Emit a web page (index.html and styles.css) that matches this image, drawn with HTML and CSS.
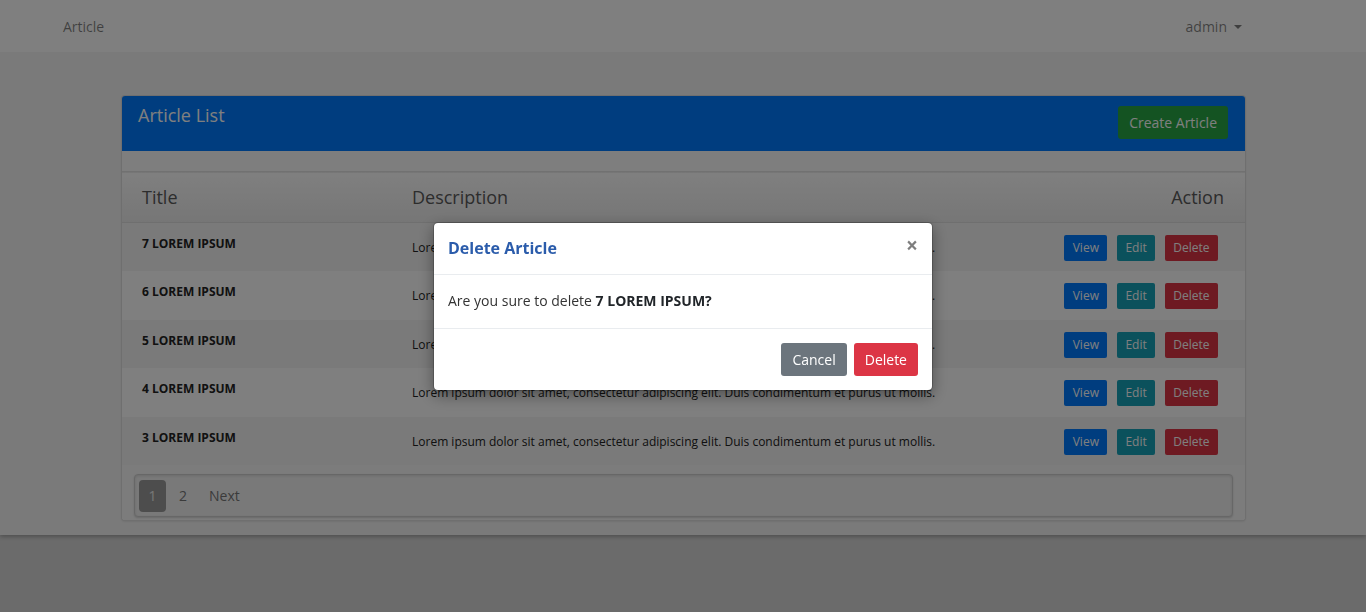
FILE: index.html
```html
<!DOCTYPE html>
<html lang="en">
<head>
<meta charset="utf-8">
<title>Article List</title>
<link rel="stylesheet" href="styles.css">
</head>
<body>
<nav class="navbar">
  <a class="brand" href="#">Article</a>
  <a class="user" href="#">admin <span class="caret"></span></a>
</nav>
<main class="page">
  <section class="card">
    <header class="card-header">
      <h5 class="card-title">Article List</h5>
      <button class="btn btn-create">Create Article</button>
    </header>
    <div class="card-body">
      <table class="table">
        <thead>
          <tr><th class="c-title">Title</th><th class="c-desc">Description</th><th class="c-act">Action</th></tr>
        </thead>
        <tbody>
          <tr class="odd"><td class="c-title">7 LOREM IPSUM</td><td class="c-desc">Lorem ipsum dolor sit amet, consectetur adipiscing elit. Duis condimentum et purus ut mollis.</td><td class="c-act"><span class="acts"><button class="btn sm view">View</button><button class="btn sm edit">Edit</button><button class="btn sm del">Delete</button></span></td></tr>
          <tr><td class="c-title">6 LOREM IPSUM</td><td class="c-desc">Lorem ipsum dolor sit amet, consectetur adipiscing elit. Duis condimentum et purus ut mollis.</td><td class="c-act"><span class="acts"><button class="btn sm view">View</button><button class="btn sm edit">Edit</button><button class="btn sm del">Delete</button></span></td></tr>
          <tr class="odd"><td class="c-title">5 LOREM IPSUM</td><td class="c-desc">Lorem ipsum dolor sit amet, consectetur adipiscing elit. Duis condimentum et purus ut mollis.</td><td class="c-act"><span class="acts"><button class="btn sm view">View</button><button class="btn sm edit">Edit</button><button class="btn sm del">Delete</button></span></td></tr>
          <tr><td class="c-title">4 LOREM IPSUM</td><td class="c-desc">Lorem ipsum dolor sit amet, consectetur adipiscing elit. Duis condimentum et purus ut mollis.</td><td class="c-act"><span class="acts"><button class="btn sm view">View</button><button class="btn sm edit">Edit</button><button class="btn sm del">Delete</button></span></td></tr>
          <tr class="odd"><td class="c-title">3 LOREM IPSUM</td><td class="c-desc">Lorem ipsum dolor sit amet, consectetur adipiscing elit. Duis condimentum et purus ut mollis.</td><td class="c-act"><span class="acts"><button class="btn sm view">View</button><button class="btn sm edit">Edit</button><button class="btn sm del">Delete</button></span></td></tr>
        </tbody>
      </table>
      <div class="pager-wrap">
        <ul class="pager">
          <li class="active">1</li>
          <li>2</li>
          <li class="next">Next</li>
        </ul>
      </div>
    </div>
  </section>
</main>

<div class="backdrop"></div>
<div class="modal">
  <div class="modal-dialog">
    <div class="modal-header">
      <h5 class="modal-title">Delete Article</h5>
      <button class="close">&times;</button>
    </div>
    <div class="modal-body">Are you sure to delete <b>7 LOREM IPSUM?</b></div>
    <div class="modal-footer">
      <button class="btn btn-secondary">Cancel</button>
      <button class="btn btn-danger">Delete</button>
    </div>
  </div>
</div>
</body>
</html>
```
FILE: styles.css
```css
* { box-sizing: border-box; }
html, body { margin: 0; padding: 0; }
body {
  font-family: "Open Sans", "Liberation Sans", sans-serif;
  font-size: 14px;
  color: #212529;
  background: #d7d7d7;
  height: 612px;
  overflow: hidden;
}
a { text-decoration: none; }

.navbar {
  height: 52px;
  background: #fff;
  display: flex;
  align-items: center;
  justify-content: space-between;
  padding: 1px 124px 0 63px;
  position: relative;
  z-index: 1;
}
.navbar a { color: rgba(0,0,0,.5); font-size: 14px; line-height: 20px; }
.user { display: flex; align-items: center; }
.caret {
  display: inline-block;
  width: 0; height: 0;
  margin-left: 7px;
  border-left: 4px solid transparent;
  border-right: 4px solid transparent;
  border-top: 4px solid rgba(0,0,0,.5);
}

.page {
  background: #f5f5f5;
  padding: 43px 120px 14px 121px;
  box-shadow: 0 2px 4px rgba(0,0,0,.25);
}

.card {
  background: #f8f8f8;
  border: 1px solid rgba(0,0,0,.1);
  border-radius: 4px;
  overflow: hidden;
  box-shadow: 0 1px 2px rgba(0,0,0,.08);
}
.card-header {
  background: #007bff;
  height: 56px;
  padding: 10px 18px 0 17px;
  display: flex;
  justify-content: space-between;
  align-items: flex-start;
  margin: -1px -1px 0;
}
.card-title {
  margin: 1px 0 0;
  color: #fff;
  font-size: 18px;
  line-height: 18px;
  font-weight: 400;
}
.btn {
  font-family: inherit;
  border: 0;
  border-radius: 3px;
  color: #fff;
  font-size: 14px;
  line-height: 21px;
  padding: 6px 11px;
  cursor: pointer;
}
.btn-create { background: #28a745; margin-top: 1px; }

.card-body { padding-top: 20px; background: #fdfdfd; }
.table {
  width: 100%;
  border-collapse: collapse;
  background: #fff;
}
.table thead tr {
  height: 51px;
  background: linear-gradient(#ffffff, #ededed);
  border-top: 1px solid #e3e3e3;
  border-bottom: 1px solid #dedede;
}
.table th {
  font-size: 18px;
  font-weight: 400;
  color: #5a5a5a;
  text-align: left;
  padding: 0 0 0 20px;
}
.table th.c-act { text-align: right; padding: 0 21px 0 0; }
.c-title { width: 270px; }
.table tbody tr { height: 48.6px; background: #fff; }
.table tbody tr.odd { background: #f4f4f4; }
.table td { vertical-align: top; font-size: 12px; color: #222; }
.table td.c-title { font-weight: 700; padding: 12px 0 0 20px; line-height: 18px; }
.table td.c-desc { padding: 16px 0 0 20px; line-height: 18px; }
.table td.c-act { text-align: right; padding: 12px 27px 0 0; }
.acts { display: inline-flex; gap: 10px; }
.btn.sm { font-size: 12px; line-height: 18px; padding: 4px 8.5px; border-radius: 2px; }
.btn.sm.edit { background: #17a2b8; padding: 4px 8px; }
.view { background: #007bff; }
.del { background: #dc3545; }

.pager-wrap { background: #f8f8f8; padding: 9px 12px 3px 12px; }
.pager {
  list-style: none;
  margin: 0;
  height: 43px;
  padding: 4px 4px;
  display: flex;
  align-items: center;
  gap: 0;
  background: #f3f3f3;
  border: 1px solid #cfcfcf;
  border-radius: 4px;
  box-shadow: inset 0 1px 3px rgba(0,0,0,.12), 0 1px 2px rgba(0,0,0,.15);
}
.pager li {
  height: 32px;
  line-height: 32px;
  padding: 0 9px;
  color: #777;
  font-size: 14px;
  border-radius: 4px;
}
.pager li.active { background: #9b9b9b; color: #eee; width: 27px; padding: 0; text-align: center; margin-right: 4px; }
.pager li.next { padding-left: 13px; }

.backdrop {
  position: fixed;
  inset: 0;
  background: rgba(0,0,0,.5);
  z-index: 10;
}
.modal {
  position: fixed;
  inset: 0;
  z-index: 20;
  display: flex;
  align-items: center;
  justify-content: center;
}
.modal-dialog {
  width: 500px;
  background: #fff;
  border: 1px solid rgba(0,0,0,.2);
  border-radius: 5px;
  box-shadow: 0 5px 15px rgba(0,0,0,.35);
  background-clip: padding-box;
}
.modal-header {
  display: flex;
  justify-content: space-between;
  align-items: center;
  padding: 15px 14px 16px 14px;
  border-bottom: 1px solid #e9ecef;
}
.modal-title {
  margin: 0;
  font-size: 16px;
  line-height: 20px;
  font-weight: 700;
  color: #2b5cab;
}
.close {
  background: none;
  border: 0;
  padding: 0;
  font-family: inherit;
  font-size: 21px;
  line-height: 1;
  font-weight: 700;
  color: #000;
  opacity: .5;
  margin-top: -4px;
}
.modal-body {
  padding: 15px 14px 17px;
  font-size: 14px;
  line-height: 21px;
  color: #333;
}
.modal-body b { color: #212529; }
.modal-footer {
  display: flex;
  justify-content: flex-end;
  gap: 7px;
  padding: 14px 14px 14px;
  border-top: 1px solid #e9ecef;
}
.modal-footer .btn { padding: 6px 11px; }
.btn-secondary { background: #6c757d; }
.btn-danger { background: #dc3545; }
```
